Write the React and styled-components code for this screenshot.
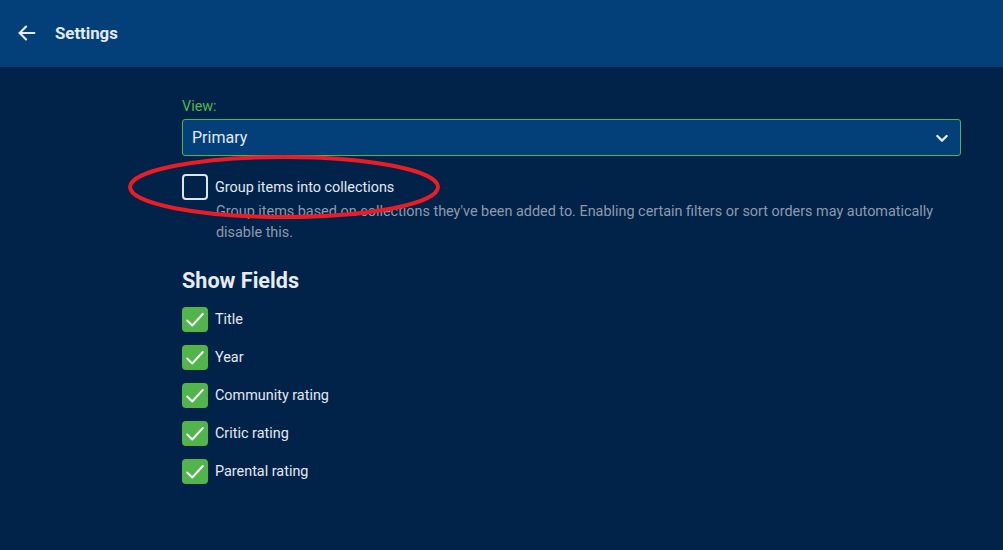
import React from 'react'
import styled, { createGlobalStyle } from 'styled-components'

const GlobalStyle = createGlobalStyle`
  html, body {
    margin: 0;
    padding: 0;
    background: #01234a;
    font-family: Roboto, "Noto Sans", sans-serif;
  }
`

const Page = styled.div`
  position: relative;
  width: 1003px;
  height: 550px;
  background: #01234a;
  overflow: hidden;
`

const Header = styled.header`
  height: 67px;
  background: #033f78;
  display: flex;
  align-items: center;
  padding: 0 0 2px 16px;
  box-sizing: border-box;
  gap: 17px;
  color: #e3e9f1;
`

const Title = styled.h1`
  margin: 0;
  font-size: 16.8px;
  font-weight: 700;
`

const Main = styled.main`
  padding: 31px 0 0 182px;
  width: 779px;
`

const FieldLabel = styled.label`
  display: block;
  color: #52b54b;
  font-size: 14.4px;
  margin-bottom: 4px;
`

const Select = styled.div`
  height: 35px;
  border: 1px solid #52b54b;
  border-radius: 3px;
  background: #033f78;
  display: flex;
  align-items: center;
  justify-content: space-between;
  padding: 0 10px 0 9px;
  color: #e3e9f1;
  font-size: 16px;
`

const CheckRow = styled.div`
  display: flex;
  align-items: center;
  gap: 7px;
  height: ${p => (p.checked ? 25 : 26)}px;
  color: #e3e9f1;
  font-size: 14.4px;
`

const Box = styled.span`
  box-sizing: border-box;
  width: 26px;
  height: ${p => (p.checked ? 25 : 26)}px;
  flex: none;
  border-radius: 4px;
  border: ${p => (p.checked ? 'none' : '2px solid #dfe4ea')};
  background: ${p => (p.checked ? '#52b54b' : 'transparent')};
  display: flex;
  align-items: center;
  justify-content: center;
`

const GroupBlock = styled.div`
  margin-top: 18px;
`

const Description = styled.p`
  margin: 1px 0 0 34px;
  color: #8e9aab;
  font-size: 14.4px;
  line-height: 21px;
`

const Heading = styled.h2`
  margin: 25px 0 14px;
  font-size: 21.6px;
  font-weight: 700;
  color: #e6ebf0;
`

const FieldList = styled.div`
  display: flex;
  flex-direction: column;
  gap: 13px;
`

const Annotation = styled.svg`
  position: absolute;
  left: 0;
  top: 0;
  pointer-events: none;
`

const Check = () => (
  <svg width="22" height="22" viewBox="0 0 24 24" fill="none" stroke="#fff" strokeWidth="2.2" strokeLinecap="round" strokeLinejoin="round">
    <polyline points="3.5 12.5 9 18 20.5 5.5" />
  </svg>
)

const fields = ['Title', 'Year', 'Community rating', 'Critic rating', 'Parental rating']

export default function App() {
  return (
    <Page>
      <GlobalStyle />
      <Header>
        <svg width="22" height="22" viewBox="0 0 24 24" fill="none" stroke="#e3e9f1" strokeWidth="2.4" strokeLinecap="round" strokeLinejoin="round">
          <line x1="20" y1="12" x2="4" y2="12" />
          <polyline points="11 5 4 12 11 19" />
        </svg>
        <Title>Settings</Title>
      </Header>
      <Main>
        <FieldLabel>View:</FieldLabel>
        <Select>
          <span>Primary</span>
          <svg width="16" height="16" viewBox="0 0 24 24" fill="none" stroke="#e3e9f1" strokeWidth="3.5" strokeLinecap="round" strokeLinejoin="round">
            <polyline points="5 9 12 16 19 9" />
          </svg>
        </Select>
        <GroupBlock>
          <CheckRow>
            <Box />
            <span>Group items into collections</span>
          </CheckRow>
          <Description>
            Group items based on collections they've been added to. Enabling certain filters or sort orders may automatically disable this.
          </Description>
        </GroupBlock>
        <Heading>Show Fields</Heading>
        <FieldList>
          {fields.map(f => (
            <CheckRow key={f} checked>
              <Box checked>
                <Check />
              </Box>
              <span>{f}</span>
            </CheckRow>
          ))}
        </FieldList>
      </Main>
      <Annotation width="1003" height="550">
        <ellipse cx="284" cy="187" rx="154" ry="30" fill="none" stroke="#ec1c24" strokeWidth="4" />
      </Annotation>
    </Page>
  )
}
